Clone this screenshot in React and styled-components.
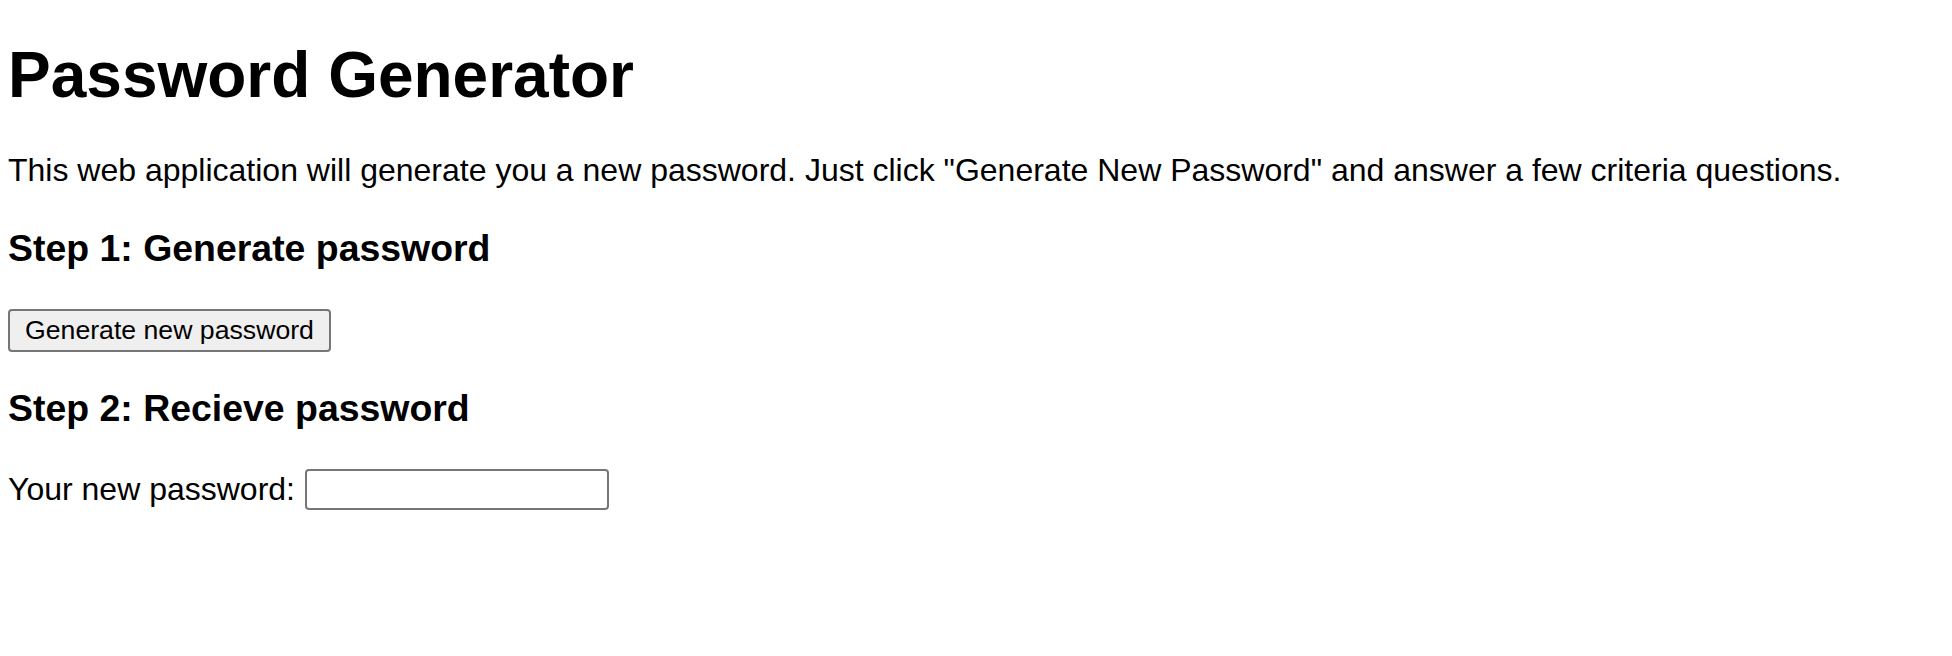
import React from "react";
import styled, { createGlobalStyle } from "styled-components";

const GlobalStyle = createGlobalStyle`
  html, body {
    background: #ffffff;
  }
  body {
    margin: 0;
    padding: 0 8px;
    color: #000000;
    font-family: "Liberation Sans", Arial, Helvetica, sans-serif;
  }
`;

const Page = styled.main`
  padding-top: 38px;
`;

const Title = styled.h1`
  margin: 0 0 40px;
  font-size: 64px;
  font-weight: bold;
  line-height: normal;
`;

const Intro = styled.p`
  margin: 0 0 38px;
  font-size: 32px;
  line-height: normal;
`;

const StepTitle = styled.h3`
  margin: 0 0 39px;
  font-size: 37.44px;
  font-weight: bold;
  line-height: normal;
`;

const Row = styled.div`
  display: flex;
  align-items: center;
  gap: 10px;
  margin-bottom: 35px;
  font-size: 32px;
`;

const Button = styled.button`
  font-family: "Liberation Sans", Arial, Helvetica, sans-serif;
  font-size: 26.67px;
  padding: 4px 15px;
  background: #efefef;
  color: #000000;
  border: 2px solid #767676;
  border-radius: 4px;
  line-height: normal;
  cursor: pointer;
`;

const Label = styled.label`
  font-size: 32px;
`;

const Field = styled.input`
  box-sizing: border-box;
  width: 304px;
  height: 41px;
  padding: 2px 4px;
  font-family: "Liberation Sans", Arial, Helvetica, sans-serif;
  font-size: 26.67px;
  border: 2px solid #767676;
  border-radius: 4px;
  background: #ffffff;
`;

export default function App() {
  return (
    <>
      <GlobalStyle />
      <Page>
        <Title>Password Generator</Title>
        <Intro>
          This web application will generate you a new password. Just click
          "Generate New Password" and answer a few criteria questions.
        </Intro>
        <StepTitle>Step 1: Generate password</StepTitle>
        <Row>
          <Button type="button">Generate new password</Button>
        </Row>
        <StepTitle>Step 2: Recieve password</StepTitle>
        <Row>
          <Label htmlFor="password">Your new password:</Label>
          <Field id="password" type="text" readOnly />
        </Row>
      </Page>
    </>
  );
}
